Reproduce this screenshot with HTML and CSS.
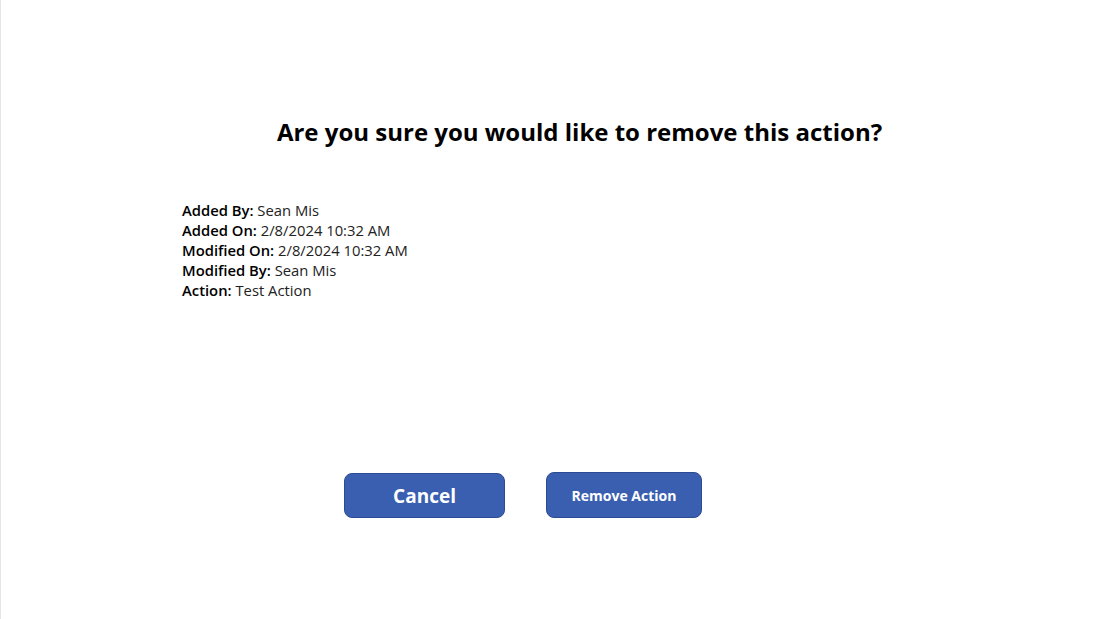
FILE: index.html
```html
<!DOCTYPE html>
<html>
<head>
<meta charset="utf-8">
<link rel="stylesheet" href="styles.css">
</head>
<body>
<div class="screen">
  <h1 class="title">Are you sure you would like to remove this action?</h1>
  <div class="details">
    <div class="row"><b>Added By:</b> Sean Mis</div>
    <div class="row"><b>Added On:</b> 2/8/2024 10:32 AM</div>
    <div class="row"><b>Modified On:</b> 2/8/2024 10:32 AM</div>
    <div class="row"><b>Modified By:</b> Sean Mis</div>
    <div class="row"><b>Action:</b> Test Action</div>
  </div>
  <div class="actions">
    <button class="btn btn-cancel">Cancel</button>
    <button class="btn btn-remove">Remove Action</button>
  </div>
</div>
</body>
</html>
```

FILE: styles.css
```css
html, body {
  margin: 0;
  padding: 0;
  background: #ffffff;
}
body {
  font-family: "Open Sans", "Noto Sans", sans-serif;
  color: #000;
}
.screen {
  width: 1102px;
  height: 619px;
  border-left: 1px solid #e6e6e6;
  box-sizing: border-box;
  display: flex;
  flex-direction: column;
}
.title {
  margin: 116px 0 0 0;
  font-size: 24px;
  line-height: 32px;
  font-weight: 700;
  text-align: center;
  padding-left: 56px;
}
.details {
  margin: 52px 0 0 181px;
  font-size: 14.8px;
  line-height: 20px;
  color: #222;
}
.details b {
  font-weight: 600;
  color: #000;
}
.actions {
  margin: 172px 0 0 343px;
  display: flex;
  gap: 41px;
  align-items: flex-start;
}
.btn {
  font-family: "Open Sans", "Noto Sans", sans-serif;
  background: #3a5fb0;
  border: 1px solid #2c4b95;
  border-radius: 8px;
  color: #fff;
  font-weight: 700;
  cursor: pointer;
  padding: 0;
}
.btn-cancel {
  width: 161px;
  height: 45px;
  font-size: 19px;
  margin-top: 1px;
}
.btn-remove {
  width: 156px;
  height: 46px;
  font-size: 14px;
}
```
